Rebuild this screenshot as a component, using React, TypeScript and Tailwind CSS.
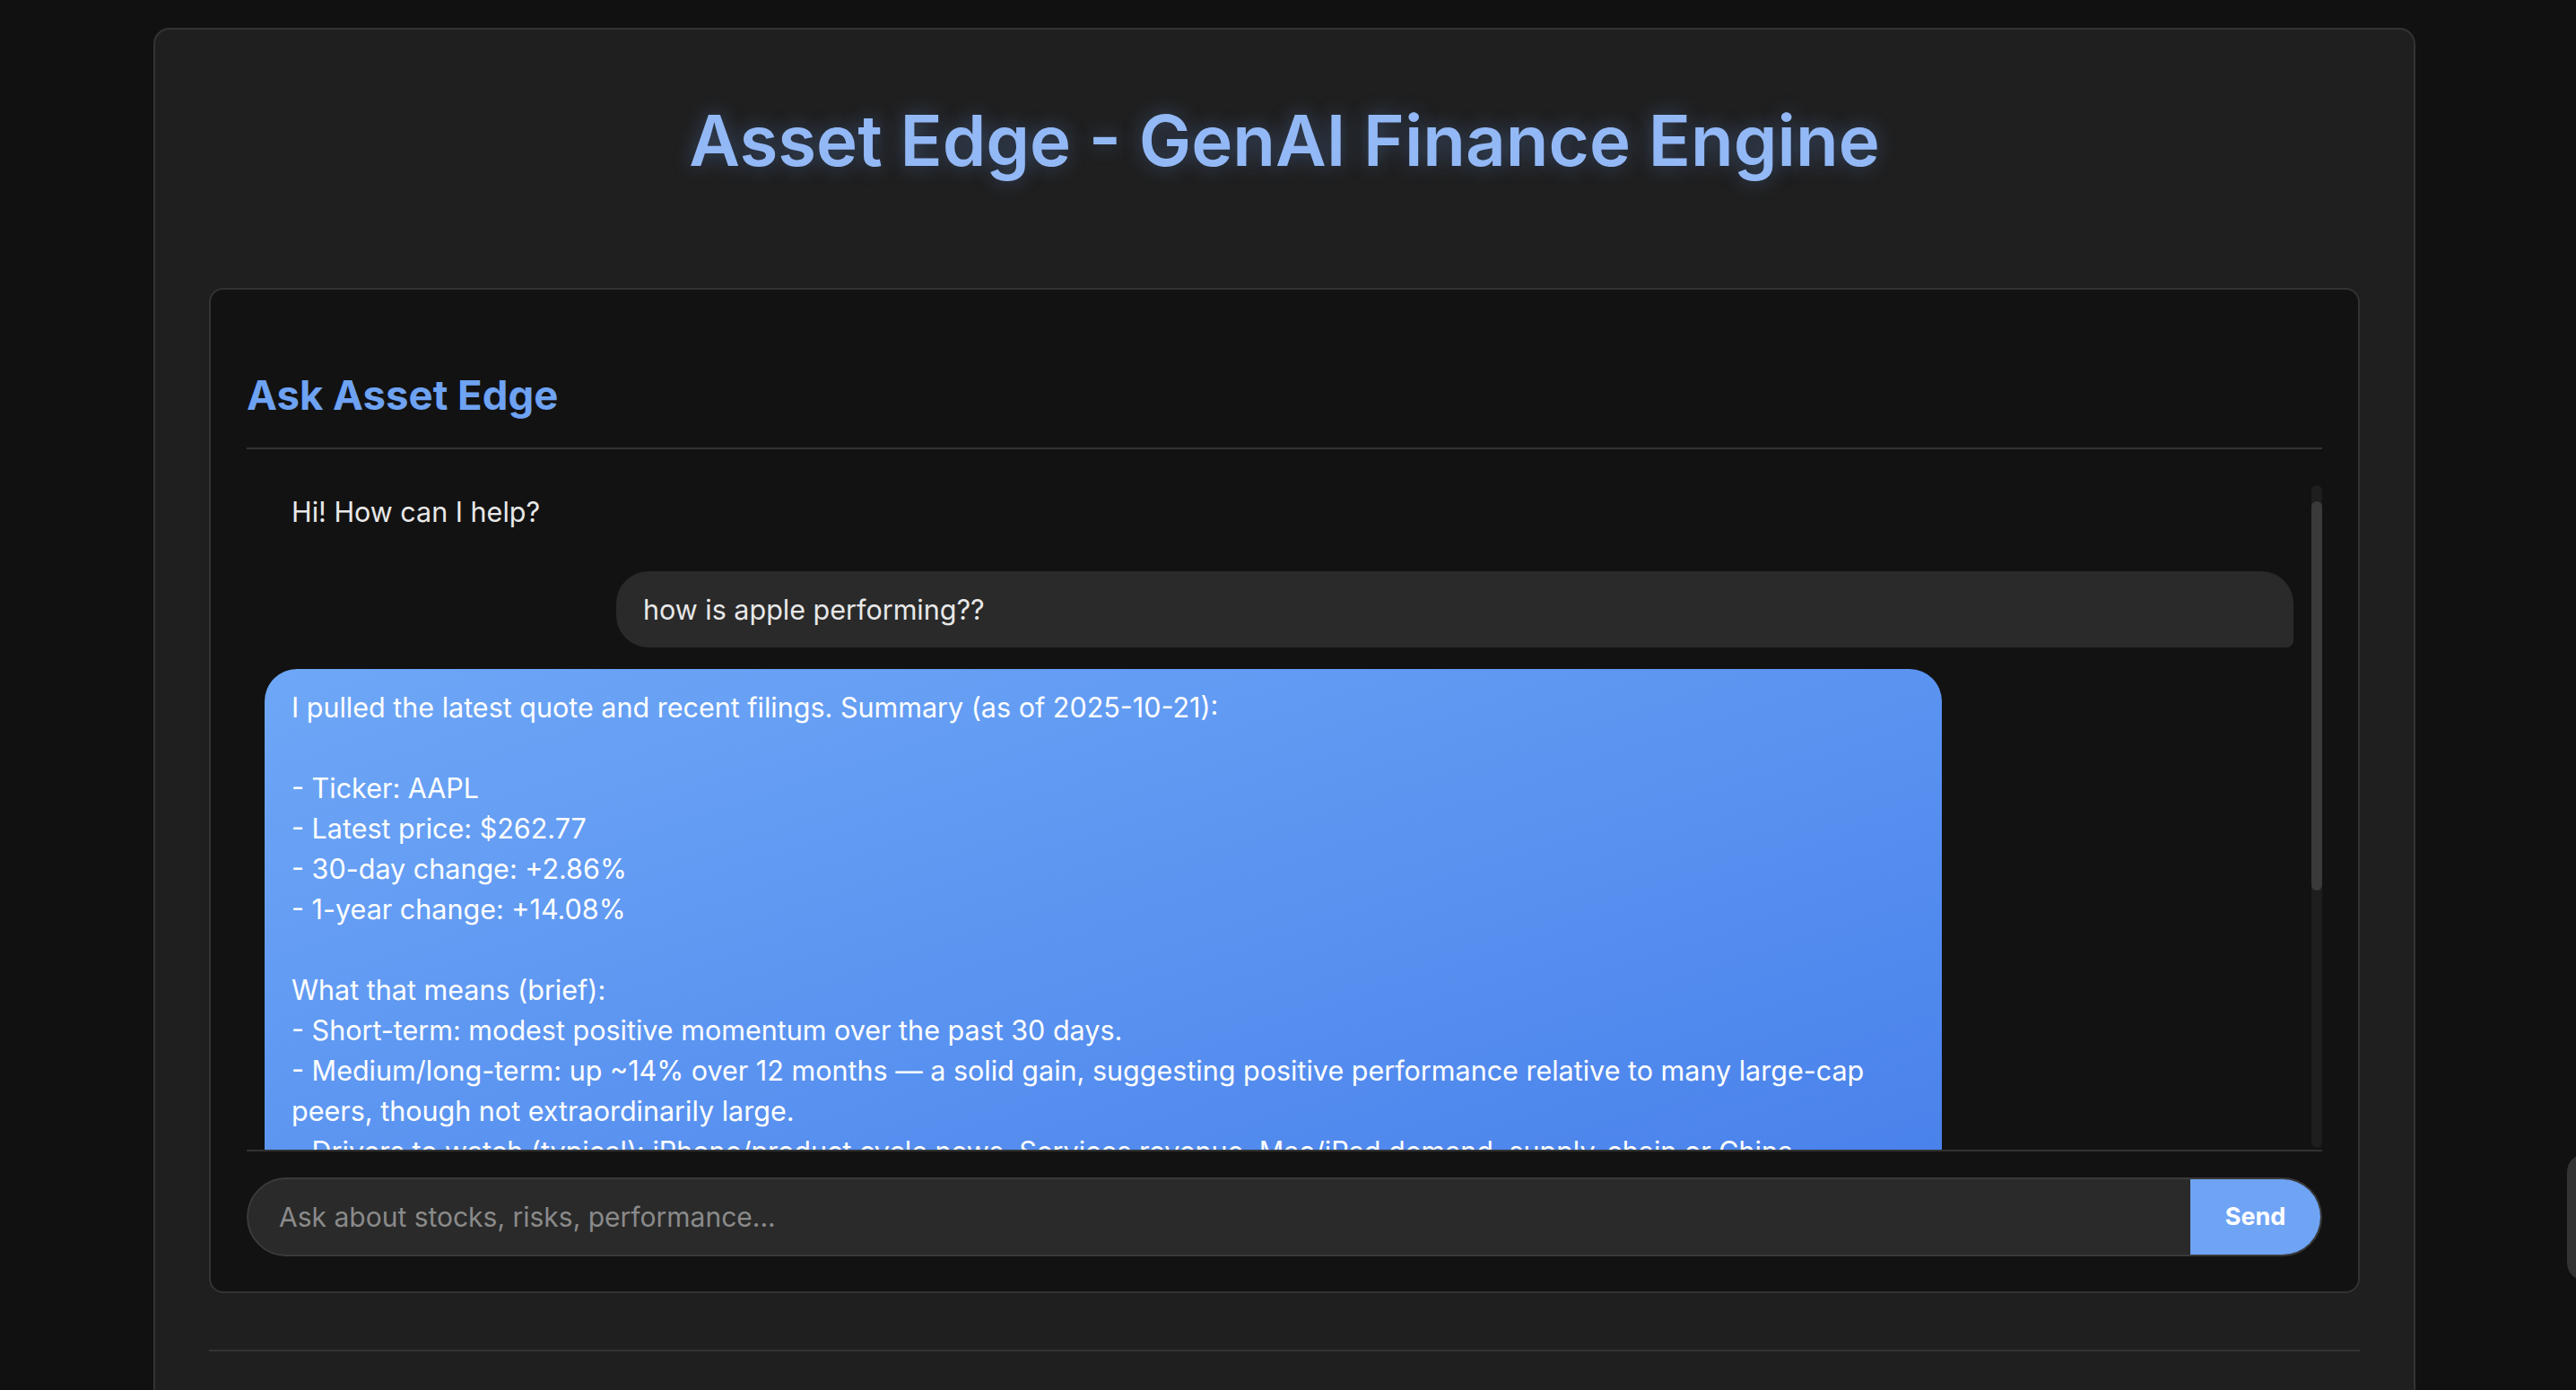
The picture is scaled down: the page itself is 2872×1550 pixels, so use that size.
const reply = [
  "I pulled the latest quote and recent filings. Summary (as of 2025-10-21):",
  "",
  "- Ticker: AAPL",
  "- Latest price: $262.77",
  "- 30-day change: +2.86%",
  "- 1-year change: +14.08%",
  "",
  "What that means (brief):",
  "- Short-term: modest positive momentum over the past 30 days.",
  "- Medium/long-term: up ~14% over 12 months \u2014 a solid gain, suggesting positive performance relative to many large-cap",
  "peers, though not extraordinarily large.",
  "- Drivers to watch (typical): iPhone/product cycle news, Services revenue, Mac/iPad demand, supply-chain or China",
  "  and regulatory developments.",
];

function ChatBox() {
  return (
    <div className="mt-[40px] h-[743px] flex border-b-2 border-[#333]">
      <div className="flex-1 overflow-hidden px-[20px]">
        <div className="-mt-[13px] flex flex-col gap-[24px] text-[30.5px] leading-[45px]">
          <div className="self-start px-[30px] py-[20px] text-[#e8e8e8]">Hi! How can I help?</div>

          <div className="self-end w-[1870px] rounded-[36px] rounded-br-[8px] bg-[#2a2a2a] px-[30px] py-[20px] text-[#e8e8e8]">
            how is apple performing??
          </div>

          <div className="self-start w-[1870px] rounded-[36px] rounded-bl-[8px] bg-linear-to-br from-[#6ea7f6] to-[#477fea] px-[30px] py-[20px] text-white">
            {reply.map((line, i) => (
              <div key={i} className="whitespace-pre h-[45px]">
                {line || " "}
              </div>
            ))}
          </div>
        </div>
      </div>

      {/* scrollbar */}
      <div className="w-[12px] h-[739px] rounded-full bg-[#1e1e1e] pt-[18px]">
        <div className="h-[434px] w-full rounded-full bg-[#3a3a3a]"></div>
      </div>
    </div>
  );
}

export default function App() {
  return (
    <div className="relative h-[1550px] overflow-hidden bg-[#111111] pt-[31px] font-['Inter',sans-serif]">
      <div className="ml-[171px] w-[2522px] rounded-[18px] border-2 border-[#333] bg-[#1f1f1f] px-[60px] pt-[78px] pb-[200px]">
        <h1 className="text-center text-[78px] leading-[92px] font-semibold text-[#93b8f6] [text-shadow:0_0_22px_rgba(110,160,245,0.35)]">
          Asset Edge - GenAI Finance Engine
        </h1>

        <section className="mt-[118px] rounded-[16px] border-2 border-[#333] bg-[#121212] px-[40px] pt-[91px] pb-[39px]">
          <h2 className="border-b-2 border-[#333] pb-[32px] text-[45.5px] leading-[53px] font-bold text-[#6ea2f2]">
            Ask Asset Edge
          </h2>

          <ChatBox />

          <form className="mt-[29px] flex h-[88px] overflow-hidden rounded-full border-2 border-[#3a3a3a] bg-[#2a2a2a]">
            <input
              className="flex-1 bg-transparent pl-[34px] text-[30px] text-white outline-none placeholder:text-[#8a8a8a]"
              placeholder="Ask about stocks, risks, performance..."
            />
            <button type="button" className="w-[145px] bg-[#6fa4f5] text-[27px] font-bold text-white">
              Send
            </button>
          </form>
        </section>

        <div className="mt-[63px] border-t-2 border-[#333]"></div>
      </div>

      <div className="absolute right-[-30px] top-[1287px] h-[141px] w-[40px] rounded-[20px] bg-[#333]"></div>
    </div>
  );
}
